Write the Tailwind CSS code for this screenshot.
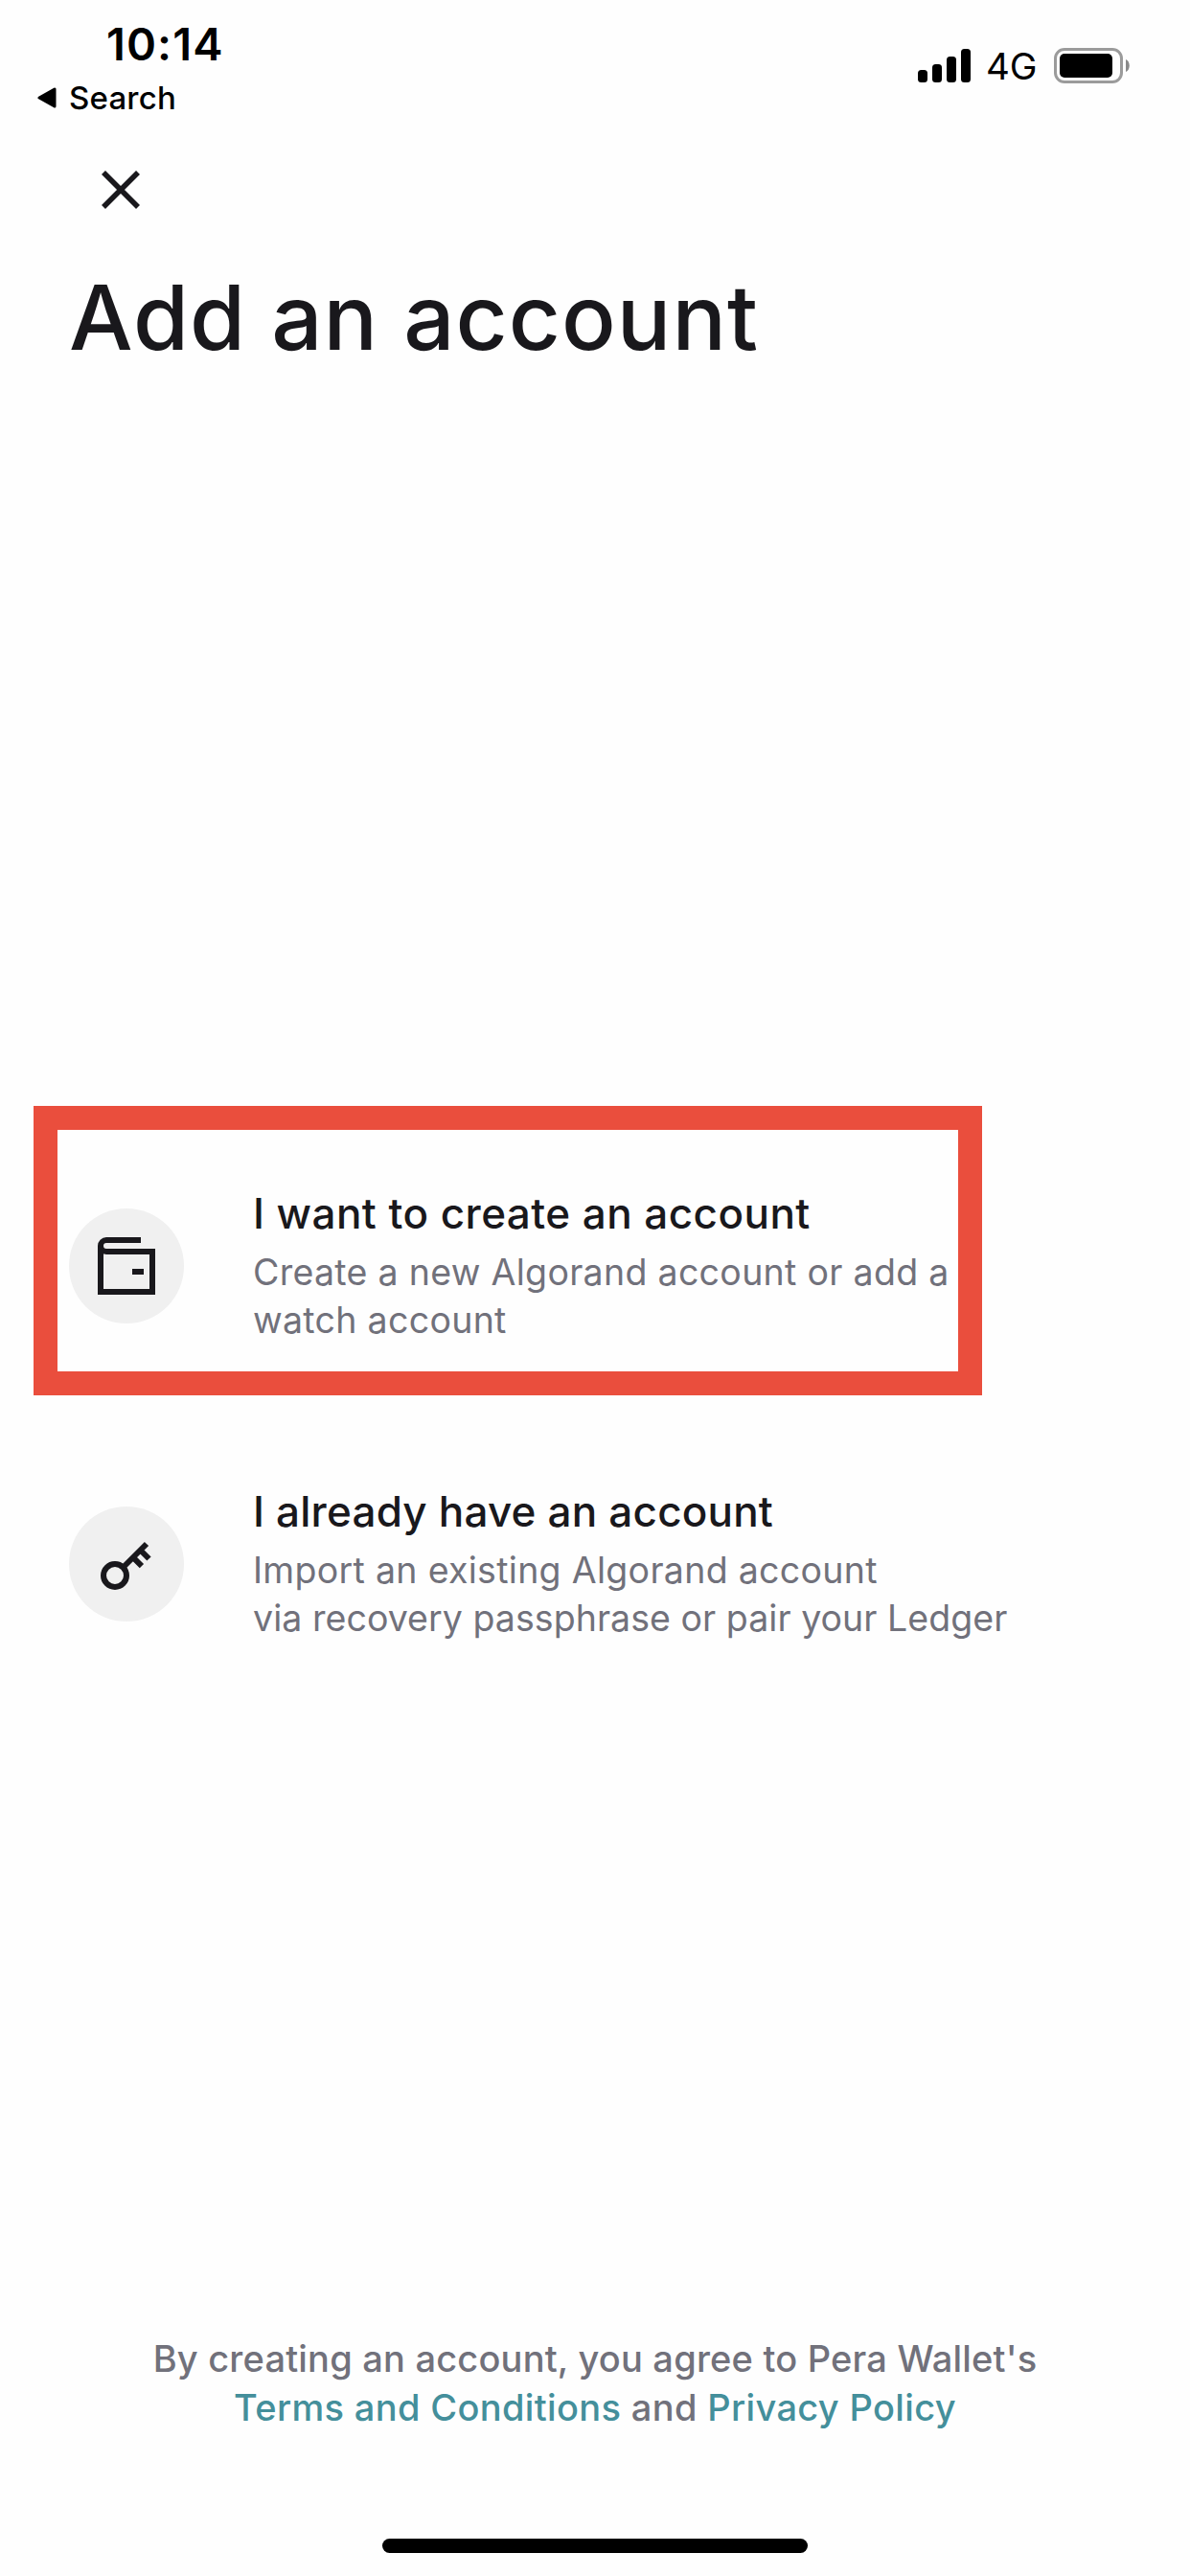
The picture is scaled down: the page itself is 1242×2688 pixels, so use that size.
<!DOCTYPE html>
<html lang="en">
<head>
<meta charset="utf-8">
<title>Add an account</title>
<script src="https://cdn.jsdelivr.net/npm/@tailwindcss/browser@4"></script>
</head>
<body class="bg-[#fefefe]">
<main class="relative flex h-[2688px] w-[1242px] flex-col overflow-hidden font-['Inter',sans-serif] text-[#19181c]">

  <!-- Status bar -->
  <header class="flex h-[140px] justify-between text-black">
    <div class="flex flex-col gap-2 pt-[18px] pl-[39px]">
      <div class="pl-[72px] text-[47px] leading-[56px] font-semibold tracking-[1.1px]">10:14</div>
      <div class="flex items-center gap-3 text-[33px] leading-10 font-medium tracking-[0.2px]">
        <svg class="h-[22px] w-[21px]" viewBox="0 0 21 22"><path d="M18 2v18L2 11z" fill="currentColor" stroke="currentColor" stroke-width="3" stroke-linejoin="round"/></svg>
        <span>Search</span>
      </div>
    </div>
    <div class="flex h-[46px] items-center self-start mt-[45px] mr-[63px]">
      <svg class="h-[35px] w-[55px]" viewBox="0 0 55 35" fill="currentColor"><rect y="22" width="10" height="13" rx="3.5"/><rect x="15" y="16" width="10" height="19" rx="3.5"/><rect x="30" y="8" width="10" height="27" rx="3.5"/><rect x="45" width="10" height="35" rx="3.5"/></svg>
      <span class="mt-0.5 ml-4 w-[71px] text-[38.5px] leading-[46px]">4G</span>
      <svg class="h-[37px] w-[79px]" viewBox="0 0 79 37"><rect x="1.5" y="1.5" width="69" height="34" rx="9.5" fill="none" stroke="#9b9b9b" stroke-width="3"/><rect x="6" y="6" width="55" height="25" rx="5" fill="#000"/><path d="M75 12c5 2 5 11 0 13z" fill="#8a8a8a"/></svg>
    </div>
  </header>

  <button class="mt-[38px] ml-[106px] size-10" aria-label="Close">
    <svg class="size-10" viewBox="0 0 40 40"><path d="M2 2l36 36M38 2L2 38" stroke="currentColor" stroke-width="5.6" fill="none"/></svg>
  </button>

  <h1 class="mt-[55px] pl-[72px] text-[94px] leading-[116px] font-medium tracking-[1px]">Add an account</h1>

  <!-- Account options -->
  <section class="mt-[850px] flex flex-col gap-[147px] pl-[72px]">
    <article class="flex gap-[72px]">
      <div class="mt-[22px] flex size-[120px] shrink-0 items-center justify-center rounded-full bg-[#f0f0f0]">
        <svg class="size-[60px]" viewBox="0 0 60 60" fill="none" stroke="currentColor" stroke-width="6"><path d="M45 3H9a6 6 0 0 0-6 6v48h54V15H9a6 6 0 0 1-6-6"/><path d="M36 36h12"/></svg>
      </div>
      <div>
        <h2 class="text-[44px] leading-[54px] font-medium tracking-[0.45px]">I want to create an account</h2>
        <p class="mt-2.5 text-[37.5px] leading-[50px] tracking-[0.3px] whitespace-nowrap text-[#71717b]">Create a new Algorand account or add a<br>watch account</p>
      </div>
    </article>
    <article class="flex gap-[72px]">
      <div class="mt-[22px] flex size-[120px] shrink-0 items-center justify-center rounded-full bg-[#f0f0f0]">
        <svg class="size-[60px]" viewBox="0 0 60 60" fill="none" stroke="currentColor" stroke-width="6"><circle cx="18" cy="42" r="12"/><path d="M26.500 33.500L51 9M44.500 15.500l9 9M36.900 23.100l9 9"/></svg>
      </div>
      <div>
        <h2 class="text-[44px] leading-[54px] font-medium tracking-[0.2px]">I already have an account</h2>
        <p class="mt-2.5 text-[37.5px] leading-[50px] tracking-[0.05px] whitespace-nowrap text-[#71717b]"><span class="tracking-[0.3px]">Import an existing Algorand account</span><br>via recovery passphrase or pair your Ledger</p>
      </div>
    </article>
  </section>

  <footer class="mt-auto flex flex-col items-center pb-6">
    <p class="text-center text-[38px] leading-[51px] font-medium tracking-[0.2px] text-[#71717b]">By creating an account, you agree to Pera Wallet's<br><span class="tracking-[0.35px]"><a class="text-[#448f9b]">Terms and Conditions</a> and <a class="text-[#448f9b]">Privacy Policy</a></span></p>
    <div class="mt-[111px] h-[15px] w-[444px] rounded-full bg-black"></div>
  </footer>

  <!-- Highlight around the first option -->
  <div class="absolute top-[1154px] left-[35px] h-[302px] w-[990px] border-25 border-[#ea4e3d]"></div>
</main>
</body>
</html>
